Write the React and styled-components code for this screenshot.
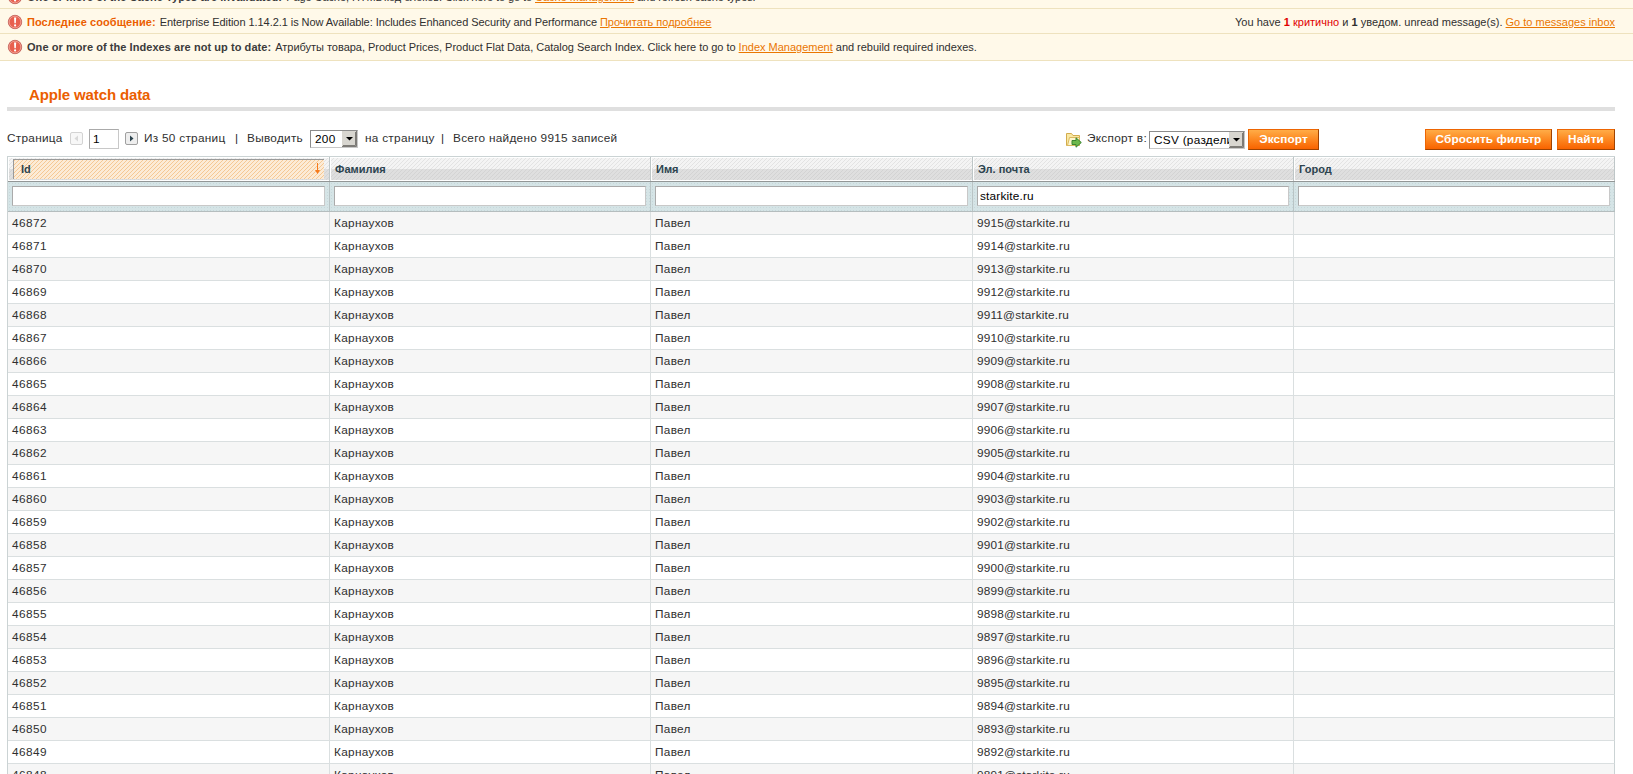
import React from 'react';
import styled, { createGlobalStyle } from 'styled-components';

const GlobalStyle = createGlobalStyle`
  * {
    box-sizing: border-box;
  }

  body {
    margin: 0;
    background: #fff;
    color: #2f2f2f;
    font: 11.8px/18px 'Liberation Sans', Arial, Helvetica, sans-serif;
  }
`;

const Page = styled.div`
  height: 774px;
  overflow: hidden;
`;

const Notice = styled.div`
  display: flex;
  justify-content: space-between;
  height: ${props => props.height}px;
  margin-top: ${props => props.$shift || 0}px;
  padding: 4px 18px 0 7px;
  border-bottom: 1px solid #eee2be;
  background: #fff9e9;
  font-size: 11px;
  line-height: 18px;
  white-space: pre;
`;

const NoticeBody = styled.div`
  display: flex;
`;

const NoticeIcon = styled.svg`
  width: 16px;
  height: 16px;
  margin: 1px 4px 0 0;
`;

const NoticeTitle = styled.strong`
  margin-right: 1px;
  color: ${props => (props.$accent ? '#eb5e00' : '#3b3b3b')};
  letter-spacing: 0.06px;
`;

const NoticeText = styled.span`
  letter-spacing: ${props => props.$spacing}px;
`;

const NoticeLink = styled.a`
  color: #ea7601;
  letter-spacing: 0;
  text-decoration: underline;
`;

const Inbox = styled.div`
  letter-spacing: 0.02px;
`;

const Critical = styled.span`
  color: #df0000;
`;

const Content = styled.div`
  padding: 0 18px 0 7px;
`;

const ContentHeader = styled.div`
  height: 50px;
  padding: 24px 0 0 22px;
  border-bottom: 4px solid #dfdfdf;
`;

const PageTitle = styled.h3`
  margin: 0;
  color: #eb5e00;
  font-size: 15px;
  font-weight: 700;
  letter-spacing: -0.13px;
  line-height: 20px;
`;

const Toolbar = styled.div`
  display: flex;
  align-items: flex-start;
  height: 45px;
  padding-top: 18px;
  letter-spacing: 0.28px;
  white-space: pre;
`;

const Label = styled.span`
  width: ${props => props.width}px;
  line-height: 18px;
`;

const PageArrow = styled.svg`
  width: 13px;
  height: 13px;
  margin: 3px 6px 0 0;
  opacity: ${props => (props.$off ? 0.45 : 1)};
`;

const PageInput = styled.input`
  width: 30px;
  height: 20px;
  margin-right: 6px;
  padding: 0 3px;
  border: 1px solid;
  border-color: #aaa #c8c8c8 #c8c8c8 #aaa;
  font: 11.8px 'Liberation Sans', Arial, sans-serif;
`;

const Select = styled.div`
  display: flex;
  width: ${props => props.width}px;
  height: 18px;
  margin: ${props => props.$top}px ${props => props.$gap}px 0 0;
  padding-left: 4px;
  border: 1px solid;
  border-color: #8c8c8c #c8c8c8 #c8c8c8 #8c8c8c;
  background: #fff;
  color: #000;
  line-height: 17px;
`;

const SelectText = styled.span`
  flex: 1;
  overflow: hidden;
`;

const SelectButton = styled.svg`
  width: 15px;
  height: 16px;
`;

const ExportIcon = styled.svg`
  width: 16px;
  height: 16px;
  margin: 3px 5px 0 0;
`;

const Spacer = styled.div`
  flex: 1;
`;

const Button = styled.button`
  width: ${props => props.width}px;
  height: 21px;
  margin-right: ${props => props.$gap || 0}px;
  padding: 0 0 1px;
  border: 1px solid;
  border-color: #ed6502 #a04300 #a04300 #ed6502;
  background: linear-gradient(#ffac47, #fd8b24 45%, #f86300);
  color: #fff;
  font: bold 11.8px 'Liberation Sans', Arial, sans-serif;
  letter-spacing: 0.1px;
`;

const Grid = styled.div`
  border-left: 1px solid #cbd3d4;
  border-top: 1px solid #cbd3d4;
`;

const GridRow = styled.div`
  display: grid;
  grid-template-columns: 322px 321px 322px 321px 321px;
`;

const HeadRow = styled(GridRow)`
  height: 25px;
  border-bottom: 1px solid #929696;
`;

const HeadCell = styled.div`
  padding: 2px 1px 1px ${props => (props.$sorted ? 5 : 1)}px;
  border-right: 1px solid #bec6c7;
  background:
    linear-gradient(#fff, #fff) 0 0 / 100% 1px no-repeat,
    linear-gradient(#fff, #fff) 0 100% / 100% 1px no-repeat,
    linear-gradient(#fff, #fff) 0 0 / 1px 100% no-repeat,
    linear-gradient(rgba(255, 255, 255, 0.4) 50%, rgba(214, 214, 214, 0.6) 50%),
    linear-gradient(135deg, #d0d0d0 12.5%, #ececec 12.5% 50%, #d0d0d0 50% 62.5%, #ececec 62.5%) 0 0 / 4px 4px;
  color: #2d444f;
  font-size: 11px;
  font-weight: 700;
`;

const HeadLabel = styled.div`
  height: 21px;
  padding-left: 4px;
  line-height: 21px;
`;

const SortedLabel = styled.div`
  display: flex;
  justify-content: space-between;
  height: 20px;
  margin-right: 4px;
  padding: 0 4px 0 7px;
  border-top: 1px solid #9a9a9a;
  border-left: 1px solid #9a9a9a;
  background: linear-gradient(135deg, #f5c894 12.5%, #fcebd6 12.5% 50%, #f5c894 50% 62.5%, #fcebd6 62.5%) 0 0 / 4px 4px;
  line-height: 19px;
`;

const SortArrow = styled.svg`
  width: 5px;
  height: 12px;
  margin-top: 3px;
`;

const FilterRow = styled(GridRow)`
  height: 30px;
  border-bottom: 1px solid #b5bdbe;
`;

const FilterCell = styled.div`
  padding: 4px;
  border-right: 1px solid #b9c4c5;
  background: #d5e4e6;
  background-image: radial-gradient(#c6d8db 0.6px, transparent 0.8px);
  background-size: 3px 3px;
`;

const FilterInput = styled.input`
  display: block;
  width: 100%;
  height: 20px;
  padding: 0 2px;
  border: 1px solid;
  border-color: #aaa #c8c8c8 #c8c8c8 #aaa;
  background: #fff;
  color: #000;
  font: 11.8px 'Liberation Sans', Arial, sans-serif;
  letter-spacing: 0.18px;
`;

const DataRow = styled(GridRow)`
  height: 23px;
  background: ${props => (props.$even ? '#f6f6f6' : '#fff')};
`;

const Cell = styled.div`
  padding: 2px 4px;
  border-right: 1px solid ${props => (props.$last ? '#cbd3d4' : '#dadfe0')};
  border-bottom: 1px solid #dadfe0;
  letter-spacing: ${props => props.$spacing || 0.3}px;
`;

const columns = ['Id', 'Фамилия', 'Имя', 'Эл. почта', 'Город'];

const rows = Array.from({ length: 25 }, (_, i) => ({
  id: 46872 - i,
  lastName: 'Карнаухов',
  firstName: 'Павел',
  email: `${9915 - i}@starkite.ru`,
  city: '',
}));

const ErrorIcon = () => (
  <NoticeIcon viewBox="0 0 16 16">
    <circle cx="8" cy="8" r="6.7" fill="#e8604f" stroke="#c76a63" />
    <circle cx="8" cy="8" r="5.8" fill="none" stroke="#f3a79b" strokeWidth="0.8" />
    <path d="M7 3.5h2.2L8.8 9.3H7.4z" fill="#fff" />
    <circle cx="8.1" cy="11.4" r="1.1" fill="#fff" />
  </NoticeIcon>
);

const Arrow = ({ back }) => (
  <PageArrow viewBox="0 0 13 13" $off={back}>
    <rect x="0.5" y="0.5" width="12" height="12" rx="1.5" fill="#eee" stroke="#a0a0a0" />
    <path d={back ? 'M8 3.5v6L4.5 6.5z' : 'M5 3.5v6l3.5-3z'} fill={back ? '#aaa' : '#2d444f'} />
  </PageArrow>
);

const DropButton = () => (
  <SelectButton viewBox="0 0 15 16">
    <rect width="15" height="16" fill="#d8d6d0" />
    <path d="M0 15.5h14.5V0M1 14.5h12.5V1" fill="none" stroke="#7d7b77" />
    <path d="M4 6h7L7.5 9.5z" fill="#000" />
  </SelectButton>
);

const App = () => (
  <Page>
    <GlobalStyle />
    <Notice height={25} $shift={-16}>
      <NoticeBody>
        <ErrorIcon />
        <NoticeTitle>One or more of the Cache Types are invalidated: </NoticeTitle>
        <NoticeText $spacing={-0.08}>
          Page Cache, HTML код блоков. Click here to go to <NoticeLink>Cache Management</NoticeLink> and refresh cache types.
        </NoticeText>
      </NoticeBody>
    </Notice>
    <Notice height={25}>
      <NoticeBody>
        <ErrorIcon />
        <NoticeTitle $accent>Последнее сообщение: </NoticeTitle>
        <NoticeText $spacing={-0.06}>
          Enterprise Edition 1.14.2.1 is Now Available: Includes Enhanced Security and Performance <NoticeLink>Прочитать подробнее</NoticeLink>
        </NoticeText>
      </NoticeBody>
      <Inbox>
        You have <Critical><strong>1</strong> критично</Critical> и <strong>1</strong> уведом. unread message(s). <NoticeLink>Go to messages inbox</NoticeLink>
      </Inbox>
    </Notice>
    <Notice height={27}>
      <NoticeBody>
        <ErrorIcon />
        <NoticeTitle>One or more of the Indexes are not up to date: </NoticeTitle>
        <NoticeText $spacing={-0.03}>
          Атрибуты товара, Product Prices, Product Flat Data, Catalog Search Index. Click here to go to <NoticeLink>Index Management</NoticeLink> and rebuild required indexes.
        </NoticeText>
      </NoticeBody>
    </Notice>

    <Content>
      <ContentHeader>
        <PageTitle>Apple watch data</PageTitle>
      </ContentHeader>

      <Toolbar>
        <Label width={63}>Страница</Label>
        <Arrow back />
        <PageInput defaultValue="1" />
        <Arrow />
        <Label width={91}>Из 50 страниц</Label>
        <Label width={12}>|</Label>
        <Label width={63}>Выводить</Label>
        <Select width={48} $top={1} $gap={7}>
          <SelectText>200</SelectText>
          <DropButton />
        </Select>
        <Label width={76}>на страницу</Label>
        <Label width={12}>|</Label>
        <Label width={170}>Всего найдено 9915 записей</Label>
        <Spacer />
        <ExportIcon viewBox="0 0 16 16">
          <path d="M0.5 13.5v-12h5l1.5 2h6.5v10z" fill="#f9e8a3" stroke="#d3ac4d" />
          <path d="M3.5 5.5h10v8h-12z" fill="#fdf6cd" stroke="#dcba60" />
          <path d="M6 8.5h4V5.8l5.3 4.7-5.3 4.7v-2.7H6z" fill="#6db84b" stroke="#3b8431" />
        </ExportIcon>
        <Label width={62}>Экспорт в:</Label>
        <Select width={96} $top={2} $gap={3}>
          <SelectText>CSV (разделитель)</SelectText>
          <DropButton />
        </Select>
        <Button width={71} $gap={106}>Экспорт</Button>
        <Button width={127} $gap={5}>Сбросить фильтр</Button>
        <Button width={58}>Найти</Button>
      </Toolbar>

      <Grid>
        <HeadRow>
          {columns.map((name, i) => (
            <HeadCell key={name} $sorted={i === 0}>
              {i === 0 ? (
                <SortedLabel>
                  {name}
                  <SortArrow viewBox="0 0 5 12">
                    <path d="M2.5 0v9" stroke="#f77a1b" />
                    <path d="M0 7h5L2.5 11z" fill="#f77a1b" />
                  </SortArrow>
                </SortedLabel>
              ) : (
                <HeadLabel>{name}</HeadLabel>
              )}
            </HeadCell>
          ))}
        </HeadRow>
        <FilterRow>
          {columns.map((name, i) => (
            <FilterCell key={name}>
              <FilterInput defaultValue={i === 3 ? 'starkite.ru' : ''} />
            </FilterCell>
          ))}
        </FilterRow>
        {rows.map((row, i) => (
          <DataRow key={row.id} $even={i % 2 === 0}>
            <Cell $spacing={0.42}>{row.id}</Cell>
            <Cell>{row.lastName}</Cell>
            <Cell>{row.firstName}</Cell>
            <Cell $spacing={0.18}>{row.email}</Cell>
            <Cell $last>{row.city}</Cell>
          </DataRow>
        ))}
      </Grid>
    </Content>
  </Page>
);

export default App;
